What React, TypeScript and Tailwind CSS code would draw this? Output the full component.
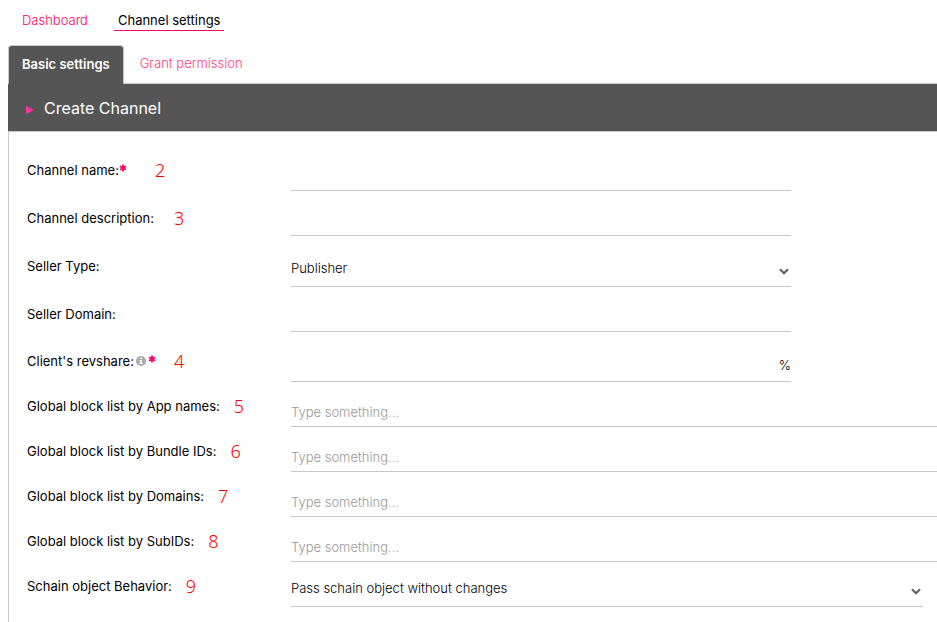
import { useId, type ReactNode } from "react";

const field =
  "block w-full appearance-none border-b border-[#c8c8c8] bg-transparent text-[13px] font-light text-black outline-none placeholder:text-[#999]";

const blockLists = [
  { label: "Global block list by App names:", step: "5" },
  { label: "Global block list by Bundle IDs:", step: "6" },
  { label: "Global block list by Domains:", step: "7" },
  { label: "Global block list by SubIDs:", step: "8" },
];

function Required() {
  return (
    <svg viewBox="0 0 8 8" className="mb-1 size-2" aria-label="required">
      <path d="M4 .5v7M1 2.2l6 3.6M7 2.2L1 5.8" stroke="#ff0066" strokeWidth="1.8" />
    </svg>
  );
}

function Info() {
  return (
    <svg viewBox="0 0 10 10" className="size-[10px]" aria-hidden="true">
      <circle cx="5" cy="5" r="5" fill="#aaa" />
      <path d="M4.1 1.5h1.8v1.5H4.1zM3.4 4h2.5v3.1h.7v1H3.4v-1h.7V5h-.7z" fill="#fff" />
    </svg>
  );
}

function Chevron() {
  return (
    <svg viewBox="0 0 10 7" className="pointer-events-none absolute right-[2px] bottom-3 h-[7px] w-[10px]" aria-hidden="true">
      <path d="M1 1.2l4 4 4-4" fill="none" stroke="#606468" strokeWidth="2.2" />
    </svg>
  );
}

type RowProps = {
  label: string;
  className: string;
  boxClass?: string;
  labelClass?: string;
  mark?: ReactNode;
  step?: string;
  stepClass?: string;
  children: (id: string) => ReactNode;
};

function Row({
  label,
  className,
  boxClass = "max-w-[500px]",
  labelClass = "h-[31px]",
  mark,
  step,
  stepClass = "ml-[14px]",
  children,
}: RowProps) {
  const id = useId();
  return (
    <div className={`flex items-end ${className}`}>
      <div className={`flex w-[264px] shrink-0 items-start ${labelClass}`}>
        <label htmlFor={id} className="flex items-center text-[13px] leading-5 text-black">
          {label}
          {mark}
        </label>
        {step && (
          <span className={`font-['Noto_Sans',sans-serif] text-lg leading-5 font-light text-[#ff0000] ${stepClass}`}>
            {step}
          </span>
        )}
      </div>
      <div className={`relative min-w-0 flex-1 ${boxClass}`}>{children(id)}</div>
    </div>
  );
}

export default function App() {
  return (
    <div className="min-h-screen overflow-hidden bg-white font-[Inter,'Liberation_Sans',sans-serif] text-black">
      <nav className="flex gap-[22px] pt-[10px] pl-[18px] text-[13px] leading-5">
        <a href="#dashboard" className="border-b border-transparent px-1 font-light text-[#ff0066]">
          Dashboard
        </a>
        <a href="#channel" className="border-b border-[#ff0066] px-1 text-black">
          Channel settings
        </a>
      </nav>

      <div className="ml-2 pt-[14px]">
        <div role="tablist" className="flex border-b border-[#c8c8c8] text-[13px]">
          <button
            role="tab"
            aria-selected="true"
            className="-mb-px h-[39px] rounded-t border border-b-0 border-[#c8c8c8] bg-[#555] px-[13px] font-semibold text-white"
          >
            Basic settings
          </button>
          <button role="tab" aria-selected="false" className="px-4 font-light text-[#ff4088]">
            Grant permission
          </button>
        </div>

        <section>
          <h1 className="flex h-12 items-center gap-[10px] border-b border-[#c8c8c8] bg-[#555] pl-[18px] text-base text-white">
            <svg viewBox="0 0 8 8" className="mt-1 size-2" aria-hidden="true">
              <path d="M0 0l8 4-8 4z" fill="#ff3399" />
            </svg>
            Create Channel
          </h1>

          <form className="min-h-[491px] border-l border-[#c8c8c8] pt-[9px] pl-[18px]">
            <Row label="Channel name:" className="h-[50px]" mark={<Required />} step="2" stepClass="ml-7">
              {(id) => <input id={id} required className={`${field} h-8`} />}
            </Row>
            <Row label="Channel description:" className="h-[45px]" labelClass="h-7" step="3" stepClass="ml-5">
              {(id) => <input id={id} className={`${field} h-8`} />}
            </Row>
            <Row label="Seller Type:" className="h-[51px]">
              {(id) => (
                <>
                  <select id={id} className={`${field} h-9`}>
                    <option>Publisher</option>
                  </select>
                  <Chevron />
                </>
              )}
            </Row>
            <Row label="Seller Domain:" className="h-[45px]" labelClass="h-7">
              {(id) => <input id={id} className={`${field} h-8`} />}
            </Row>
            <Row
              label="Client's revshare:"
              className="h-[50px]"
              mark={
                <span className="ml-[2px] flex items-center gap-[2px]">
                  <Info />
                  <Required />
                </span>
              }
              step="4"
              stepClass="ml-[18px]"
            >
              {(id) => (
                <div className="flex h-8 items-center border-b border-[#c8c8c8] text-[13px] font-light">
                  <input id={id} required className="min-w-0 flex-1 outline-none" />
                  <span>%</span>
                </div>
              )}
            </Row>
            {blockLists.map((item) => (
              <Row key={item.step} label={item.label} className="h-[45px]" boxClass="" step={item.step}>
                {(id) => <input id={id} placeholder="Type something..." className={`${field} h-[30px]`} />}
              </Row>
            ))}
            <Row label="Schain object Behavior:" className="h-[45px]" boxClass="mr-[14px]" step="9">
              {(id) => (
                <>
                  <select id={id} className={`${field} h-9`}>
                    <option>Pass schain object without changes</option>
                  </select>
                  <Chevron />
                </>
              )}
            </Row>
          </form>
        </section>
      </div>
    </div>
  );
}
